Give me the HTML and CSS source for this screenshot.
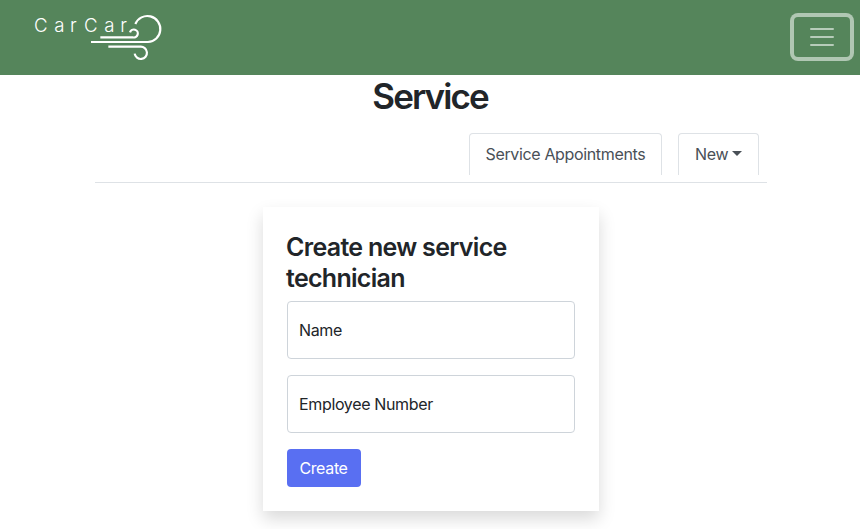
FILE: index.html
```html
<!DOCTYPE html>
<html lang="en">
<head>
<meta charset="utf-8">
<title>CarCar</title>
<link rel="stylesheet" href="styles.css">
</head>
<body>
<header class="navbar">
  <a class="brand" aria-label="CarCar">
    <svg width="160" height="75" viewBox="0 0 480 225">
      <text class="logo-text" y="97" x="42 103 150 192 253 301">CarCar</text>
      <g class="wind">
        <path d="M213 126H384A39 39 0 1 0 346 72"/>
        <path d="M241 112H338A12 12 0 1 0 330 97"/>
        <path d="M265 140H361A18.500 18.500 0 1 1 344 161"/>
      </g>
    </svg>
  </a>
  <button class="toggler" aria-label="Menu">
    <svg width="30" height="30" viewBox="0 0 30 30"><path d="M4 7h22M4 15h22M4 23h22"/></svg>
  </button>
</header>
<main class="container">
  <h1>Service</h1>
  <nav class="tabs">
    <a class="tab appointments">Service Appointments</a>
    <a class="tab new">New<span class="caret"></span></a>
  </nav>
  <form class="card">
    <h2>Create new service<br>technician</h2>
    <div class="field">Name</div>
    <div class="field number">Employee Number</div>
    <button class="create" type="button">Create</button>
  </form>
</main>
</body>
</html>
```
FILE: styles.css
```css
* { box-sizing: border-box; }
body {
  margin: 0;
  height: 529px;
  overflow: hidden;
  background: #fff;
  color: #212529;
  font: 400 16px/24px Inter, "Liberation Sans", sans-serif;
  letter-spacing: -0.35px;
}
.navbar {
  height: 75px;
  display: flex;
  justify-content: space-between;
  align-items: center;
  padding: 0 10px 0 20px;
  background: #55855b;
}
.brand, .brand svg { display: block; }
.logo-text {
  font: 300 56px Inter, sans-serif;
  letter-spacing: 0;
  fill: #fff;
}
.wind {
  fill: none;
  stroke: #fff;
  stroke-width: 6.5;
}
.toggler {
  width: 56px;
  height: 40px;
  margin-top: -1px;
  padding: 0;
  display: flex;
  align-items: center;
  justify-content: center;
  border: 0;
  border-radius: 4px;
  background: transparent;
  box-shadow: 0 0 0 4px #b0c7b3;
}
.toggler path {
  stroke: #b7ccba;
  stroke-width: 2;
  stroke-linecap: round;
}
.container {
  width: 672px;
  margin-left: 95px;
}
h1, h2 { margin: 0; font-weight: 600; }
h1 {
  height: 58px;
  padding-right: 2px;
  font-size: 35px;
  line-height: 42px;
  letter-spacing: -1.9px;
  text-align: center;
}
.tabs {
  height: 50px;
  display: flex;
  justify-content: flex-end;
  gap: 16px;
  padding-right: 8px;
  border-bottom: 1px solid #dee2e6;
}
.tab {
  height: 42px;
  padding: 8px 15.5px;
  border: 1px solid #dee2e6;
  border-bottom: 0;
  border-radius: 4px 4px 0 0;
  color: #495057;
  white-space: nowrap;
}
.appointments { width: 193px; }
.new { width: 81px; padding-left: 16px; }
.caret {
  display: inline-block;
  margin-left: 4px;
  vertical-align: 4px;
  border: 5px solid transparent;
  border-top-color: #495057;
  border-bottom: 0;
}
.card {
  width: 336px;
  height: 304px;
  margin: 24px 0 0 168px;
  padding: 24px;
  background: #fff;
  box-shadow: 0 8px 16px rgba(0, 0, 0, .15);
}
h2 {
  height: 70px;
  padding-top: 1px;
  margin-left: -1px;
  font-size: 25px;
  line-height: 31px;
  letter-spacing: -0.7px;
  white-space: nowrap;
}
.field {
  height: 58px;
  margin-bottom: 16px;
  padding: 16px 11px;
  border: 1px solid #ced4da;
  border-radius: 4px;
}
.create {
  width: 74px;
  height: 38px;
  display: block;
  padding: 0 1px 0 0;
  border: 0;
  border-radius: 4px;
  background: #596ff2;
  color: #fff;
  font: inherit;
  letter-spacing: inherit;
}
```
